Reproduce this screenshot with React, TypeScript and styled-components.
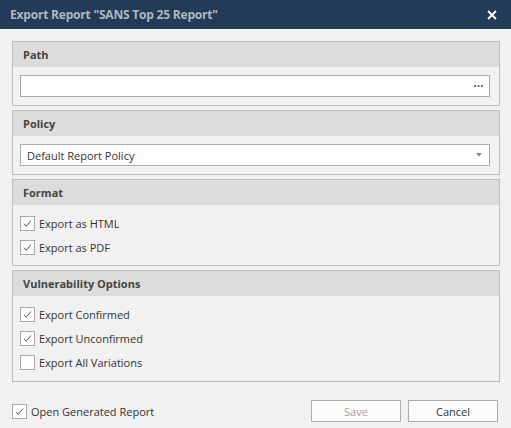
import React from "react";
import styled, { createGlobalStyle } from "styled-components";

const Global = createGlobalStyle`
  html, body { margin: 0; padding: 0; background: #f1f1f1; }
  body { font-family: "Open Sans", "Noto Sans", sans-serif; font-size: 11px; color: #333; }
  * { box-sizing: border-box; }
`;

const Window = styled.div`
  width: 511px;
  height: 428px;
  background: #f1f1f1;
  display: flex;
  flex-direction: column;
`;

const TitleBar = styled.div`
  height: 29px;
  background: #243b55;
  display: flex;
  align-items: center;
  justify-content: space-between;
  padding: 0 14px 0 10px;
`;

const Title = styled.div`
  color: #aeb8c4;
  font-weight: 700;
  font-size: 12px;
  letter-spacing: -0.2px;
`;

const Close = styled.div`
  color: #fff;
  display: flex;
  align-items: center;
`;

const Body = styled.div`
  padding: 12px 11px 0 12px;
  display: flex;
  flex-direction: column;
  gap: 4px;
`;

const Group = styled.div`
  border: 1px solid #bdbdbd;
  background: #f1f1f1;
`;

const GroupHeader = styled.div`
  height: 25px;
  background: #dcdcdc;
  display: flex;
  align-items: center;
  padding-left: 10px;
  font-weight: 700;
  color: #444;
  font-size: 11px;
`;

const InputPad = styled.div`
  padding: 8px 9px 8px 7px;
`;

const Field = styled.div`
  height: 22px;
  border: 1px solid #ababab;
  background: #fff;
  display: flex;
  align-items: center;
  justify-content: space-between;
  padding: 0 6px 0 6px;
  color: #333;
`;

const Options = styled.div<{ $bottom: number }>`
  padding: 6px 0 ${(p) => p.$bottom}px 7px;
  display: flex;
  flex-direction: column;
`;

const CheckRow = styled.label`
  height: 24px;
  display: flex;
  align-items: center;
  gap: 4px;
  color: #333;
`;

const Box = styled.span`
  width: 15px;
  height: 15px;
  border: 1px solid #a8a8a8;
  background: #fff;
  display: inline-flex;
  align-items: center;
  justify-content: center;
`;

const Footer = styled.div`
  display: flex;
  align-items: center;
  justify-content: space-between;
  padding: 17px 13px 0 12px;
`;

const Buttons = styled.div`
  display: flex;
  gap: 7px;
`;

const Button = styled.button<{ $disabled?: boolean }>`
  width: 90px;
  height: 22px;
  border: 1px solid #adadad;
  background: #fbfbfb;
  font-family: inherit;
  font-size: 11px;
  color: ${(p) => (p.$disabled ? "#a3a3a3" : "#333")};
  padding: 0;
`;

const Check = ({ checked }: { checked: boolean }) => (
  <Box>
    {checked && (
      <svg width="11" height="11" viewBox="0 0 11 11">
        <path d="M2 5.8 L4.3 8.3 L9 2.5" fill="none" stroke="#555" strokeWidth="1" />
      </svg>
    )}
  </Box>
);

const CheckItem = ({ label, checked }: { label: string; checked: boolean }) => (
  <CheckRow>
    <Check checked={checked} />
    <span>{label}</span>
  </CheckRow>
);

export default function App() {
  return (
    <Window>
      <Global />
      <TitleBar>
        <Title>Export Report "SANS Top 25 Report"</Title>
        <Close>
          <svg width="10" height="10" viewBox="0 0 10 10">
            <path d="M1 1 L9 9 M9 1 L1 9" stroke="#fff" strokeWidth="1.8" />
          </svg>
        </Close>
      </TitleBar>
      <Body>
        <Group>
          <GroupHeader>Path</GroupHeader>
          <InputPad>
            <Field>
              <span />
              <svg width="9" height="3" viewBox="0 0 9 3">
                <rect x="0" y="0" width="2" height="2" fill="#777" />
                <rect x="3.5" y="0" width="2" height="2" fill="#777" />
                <rect x="7" y="0" width="2" height="2" fill="#777" />
              </svg>
            </Field>
          </InputPad>
        </Group>
        <Group>
          <GroupHeader>Policy</GroupHeader>
          <InputPad>
            <Field>
              <span>Default Report Policy</span>
              <svg width="8" height="4" viewBox="0 0 8 4">
                <path d="M1 0 L7 0 L4 3.5 Z" fill="#888" />
              </svg>
            </Field>
          </InputPad>
        </Group>
        <Group>
          <GroupHeader>Format</GroupHeader>
          <Options $bottom={6}>
            <CheckItem label="Export as HTML" checked />
            <CheckItem label="Export as PDF" checked />
          </Options>
        </Group>
        <Group>
          <GroupHeader>Vulnerability Options</GroupHeader>
          <Options $bottom={7}>
            <CheckItem label="Export Confirmed" checked />
            <CheckItem label="Export Unconfirmed" checked />
            <CheckItem label="Export All Variations" checked={false} />
          </Options>
        </Group>
      </Body>
      <Footer>
        <CheckItem label="Open Generated Report" checked />
        <Buttons>
          <Button $disabled>Save</Button>
          <Button>Cancel</Button>
        </Buttons>
      </Footer>
    </Window>
  );
}
